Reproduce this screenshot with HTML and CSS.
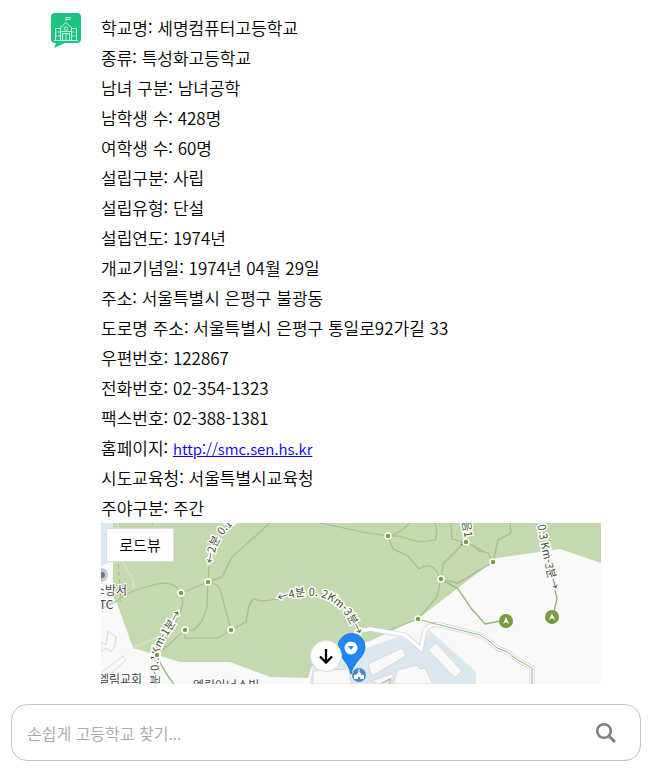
FILE: index.html
```html
<!DOCTYPE html>
<html lang="ko">
<head>
<meta charset="utf-8">
<meta name="viewport" content="width=device-width, initial-scale=1">
<title>고등학교 찾기</title>
<link rel="stylesheet" href="styles.css">
</head>
<body>
<main class="chat">
  <article class="message">
    <svg class="avatar" viewBox="0 0 30 35" aria-hidden="true">
      <path fill="#1dc47f" d="M4 0H26Q30 0 30 4V26Q30 30 26 30H14L3 35L5 30H4Q0 30 0 26V4Q0 0 4 0Z"/>
      <g fill="none" stroke="#c9f5e0" stroke-width="1">
        <path d="M15 8V4M15 4.500h4v2h-4M9 15L15 9.500L21 15M9.500 15V27M20.500 15V27M4 15.500H9M21 15.500H26M4.500 15.500V27M25.500 15.500V27M3 27.500H27M9 18.500H21M11.500 20V27M18.500 20V27M11.500 20.500H18.500M15 20V27"/>
        <path stroke-dasharray="2 1" d="M4 19H9M21 19H26M4 23H9M21 23H26"/>
        <circle cx="15" cy="15.500" r="1.700"/>
      </g>
    </svg>
    <div class="content">
      <p>학교명: 세명컴퓨터고등학교</p>
      <p>종류: 특성화고등학교</p>
      <p>남녀 구분: 남녀공학</p>
      <p>남학생 수: 428명</p>
      <p>여학생 수: 60명</p>
      <p>설립구분: 사립</p>
      <p>설립유형: 단설</p>
      <p>설립연도: 1974년</p>
      <p>개교기념일: 1974년 04월 29일</p>
      <p>주소: 서울특별시 은평구 불광동</p>
      <p>도로명 주소: 서울특별시 은평구 통일로92가길 33</p>
      <p>우편번호: 122867</p>
      <p>전화번호: 02-354-1323</p>
      <p>팩스번호: 02-388-1381</p>
      <p>홈페이지: <a href="http://smc.sen.hs.kr">http://smc.sen.hs.kr</a></p>
      <p>시도교육청: 서울특별시교육청</p>
      <p>주야구분: 주간</p>
      <div class="map">
        <svg class="map-canvas" viewBox="101 523 500 161" role="img" aria-label="학교 위치 지도">
          <defs>
            <path id="label-north" d="M213 564L216 548Q220 535 238 520"/>
            <path id="label-west" d="M160 712L159 669Q157 652 165 640Q171 630 182 613"/>
            <path id="label-center" d="M279 602Q303 593 320 597Q343 602 357 637L359 645"/>
            <path id="label-east" d="M534 500Q537 525 541 545L546 570L552 590"/>
          </defs>
          <rect x="101" y="523" width="500" height="161" fill="#f9f9f9"/>
          <path fill="#dce8ef" d="M101 523H114V561L101 566Z"/>
          <path fill="#c3daaf" d="M113 523H601V563L560 549L497 558L475 575L419 618L370 641L322 655L311 668L308 678L270 677L230 662L180 662L133 648L117 603L113 597Z"/>
          <path fill="#dce8ef" d="M314 659L345 655L401 636L421 652L429 630L444 643L476 672V684H310Z"/>
          <g fill="none" stroke="#e9a178" stroke-dasharray="4 3">
            <path d="M119 523L118 555L121 602"/><path d="M153 523L150 532"/>
          </g>
          <g fill="none" stroke="#d2e0c3" stroke-width="2">
            <path d="M118 523L120 558L133 579L134 589"/><path d="M133 648L160 636"/>
          </g>
          <g fill="none" stroke="#a0bf8e" stroke-width="1.200">
            <path d="M101 609L117 601Q130 589 163 583Q176 583 181 593L183 603L179 616L157 655"/>
            <path d="M181 593L208 582L209 562M208 582L207 608L202 621L194 630H185L157 655"/>
            <path d="M185 630V638H218L231 630L246 622L249 606L253 599L262 601L280 599"/>
            <path d="M208 582Q216 583 220 589L231 630"/>
            <path d="M208 582L222 577L232 557L270 523"/>
            <path d="M320 523L362 532L388 536L398 536L420 542L435 540Q438 533 435 523"/>
            <path d="M388 536Q402 533 409 523M388 536L393 549L408 556L419 569Q432 560 439 576L441 579"/>
            <path d="M441 579L443 564L465 542M451 523L452 539L466 542L485 552"/>
            <path d="M441 579L437 597L418 619L390 630Q370 632 355 630"/>
            <path d="M441 579L458 583L493 562L498 540L511 533L510 523"/>
            <path d="M493 562L488 553L479 551L473 545"/>
          </g>
          <path fill="none" stroke="#8fb777" stroke-width="1.300" d="M441 579L458 589L471 608L485 624L500 621M555 590L557 598L553 616M157 655Q163 671 174 684"/>
          <path fill="none" stroke="#d2d2d2" stroke-width="5" d="M354 632L370 629L405 635L421 649L425 630Q431 623 441 625L480 635L489 641L497 648L508 652L516 659L532 668V684"/>
          <path fill="none" stroke="#fff" stroke-width="3.500" d="M354 632L370 629L405 635L421 649L425 630Q431 623 441 625L480 635L489 641L497 648L508 652L516 659L532 668V684"/>
          <path fill="none" stroke="#91b77a" d="M418 619L436 624L480 635L489 641L497 648L508 652L516 659L532 668V684"/>
          <g fill="#f9f9f9" stroke="#d5dadd">
            <path d="M368 664L402 648L406 656L372 676Z"/><path d="M428 650L436 643L462 671L455 678Z"/>
            <path d="M313 671L348 669L352 684H313Z"/>
            <path d="M393 684L398 670L417 665L420 669L425 668L433 684Z"/>
            <path d="M371 681L392 674L394 677L380 684Z"/>
            <path d="M101 642L106 645L108 631L116 637L115 645L111 652L106 648L101 652Z"/>
            <path d="M101 673L123 656L126 660L107 677Z"/>
          </g>
          <path fill="none" stroke="#ca9c88" d="M382 683L390 679V684"/>
          <g class="trail-label">
            <text><textPath href="#label-north">←2분 0.1Km</textPath></text>
            <text text-anchor="end"><textPath href="#label-west" startOffset="100%">분-0.1Km-1분→</textPath></text>
            <text><textPath href="#label-center">←4분 0. 2Km-3분→</textPath></text>
            <text text-anchor="end"><textPath href="#label-east" startOffset="100%">- 0.3 Km-3분→</textPath></text>
            <text transform="translate(462 522) rotate(80)">음1</text>
          </g>
          <path fill="none" stroke="#43523c" d="M461 545L465 541M461 542L466 546"/>
          <g fill="#799f48" stroke="#fff" stroke-width="1.500">
            <circle cx="208" cy="582" r="3"/><circle cx="181" cy="593" r="3"/><circle cx="185" cy="630" r="3"/>
            <circle cx="157" cy="655" r="3"/><circle cx="231" cy="630" r="3"/><circle cx="388" cy="536" r="3"/>
            <circle cx="441" cy="579" r="3"/><circle cx="418" cy="619" r="3"/><circle cx="493" cy="562" r="3"/>
            <circle cx="466" cy="542" r="3"/>
          </g>
          <circle cx="101" cy="575" r="7" fill="#c6c9ce"/><circle cx="102" cy="575" r="3" fill="#727880"/>
          <g class="place-label">
            <text x="94" y="595">소방서</text><text x="99" y="609">TC</text>
            <text x="98" y="684">엘림교회</text><text x="193" y="690">엘림아너스빌</text>
          </g>
          <g fill="#799a42"><circle cx="506" cy="621" r="7"/><circle cx="552" cy="617" r="7"/></g>
          <path fill="#fff" d="M506 617L509 624L506 622L503 624ZM552 613L555 620L552 618L549 620Z"/>
          <path fill="#1f87f5" stroke="#2376d0" d="M351 674C349 662 338 657 338 647A13.500 13.500 0 0 1 365 647C365 657 353 662 351 674Z"/>
          <circle cx="351" cy="648" r="6.500" fill="#fff"/><path fill="#2c8eed" d="M348 646H354L351 650Z"/>
          <circle cx="359" cy="675" r="7" fill="#4b8dc6"/>
          <path fill="#fff" d="M358.500 669H359.500V672L362 675H364V679H360V677H358V679H354V675H356L358.500 672Z"/>
        </svg>
        <button class="roadview" type="button">로드뷰</button>
      </div>
    </div>
  </article>
  <button class="scroll-down" type="button" aria-label="아래로 이동">
    <svg viewBox="0 0 18 18" width="18" height="18" aria-hidden="true"><path d="M9 2V15M3 9.500L9 15.500L15 9.500" fill="none" stroke="#000" stroke-width="2.300"/></svg>
  </button>
</main>
<form class="search">
  <input class="search-input" type="text" aria-label="고등학교 검색" placeholder="손쉽게 고등학교 찾기...">
  <button class="search-button" type="submit" aria-label="검색">
    <svg viewBox="0 0 22 22" width="22" height="22" aria-hidden="true"><circle cx="9" cy="9" r="6.800" fill="none" stroke="#808080" stroke-width="2.600"/><path d="M14 14L20 20" stroke="#808080" stroke-width="3"/></svg>
  </button>
</form>
</body>
</html>
```

FILE: styles.css
```css
* { box-sizing: border-box; }

body {
  display: flex;
  flex-direction: column;
  height: 100vh;
  margin: 0;
  background: #fff;
  color: #000;
  font-family: "Noto Sans CJK KR", sans-serif;
  font-size: 17px;
  font-weight: 350;
}

button, input { font: inherit; }

.chat {
  position: relative;
  flex: 1;
  min-height: 0;
  overflow: hidden;
}

.message {
  display: flex;
  align-items: flex-start;
  gap: 20px;
  padding: 13px 53px 0 51px;
}

.avatar {
  flex: none;
  width: 30px;
  height: 35px;
}

.content {
  flex: 1;
  min-width: 0;
  line-height: 30px;
}

.content p { margin: 0; }

.content a {
  color: #00e;
  font-size: 15px;
  line-height: 1;
}

.map {
  position: relative;
  overflow: hidden;
}

.map-canvas {
  display: block;
  width: 100%;
}

.trail-label {
  fill: #43523c;
  stroke: #fff;
  stroke-width: 3px;
  paint-order: stroke;
  font-size: 11px;
  font-weight: 400;
}

.place-label {
  fill: #3d464d;
  stroke: #fff;
  stroke-width: 2px;
  paint-order: stroke;
  font-size: 12px;
  font-weight: 400;
}

.roadview {
  position: absolute;
  top: 5px;
  left: 5px;
  width: 68px;
  height: 34px;
  padding: 0;
  border: 1px solid #dcdcdc;
  background: #fff;
  color: #000;
  font-size: 15px;
  line-height: 30px;
}

.scroll-down {
  position: absolute;
  bottom: 12px;
  left: 50%;
  display: grid;
  place-items: center;
  width: 32px;
  height: 32px;
  margin-left: -17px;
  padding: 0;
  border: 1px solid #ddd;
  border-radius: 50%;
  background: #fff;
}

.search {
  display: flex;
  align-items: center;
  height: 57px;
  margin: 20px 13px 7px 11px;
  padding: 0 23px 0 15px;
  border: 1px solid #c4c4c4;
  border-radius: 16px;
}

.search-input {
  flex: 1;
  min-width: 0;
  height: 40px;
  padding: 0;
  border: 0;
  outline: 0;
  background: none;
  font-size: 16px;
}

.search-input::placeholder {
  color: #a9a9a9;
  opacity: 1;
}

.search-button {
  display: grid;
  place-items: center;
  padding: 0;
  border: 0;
  background: none;
}
```
